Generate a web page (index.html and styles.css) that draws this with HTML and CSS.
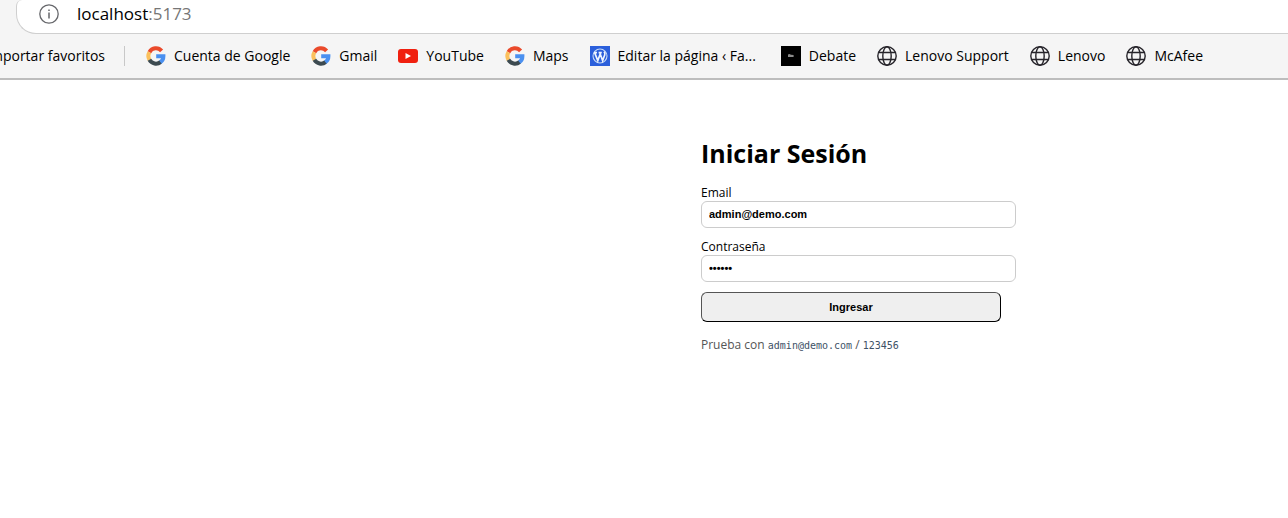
FILE: index.html
```html
<!DOCTYPE html>
<html lang="es">
<head>
<meta charset="utf-8">
<title>Iniciar Sesión</title>
<link rel="stylesheet" href="styles.css">
</head>
<body>
<svg class="defs" aria-hidden="true">
  <symbol id="google" viewBox="0 0 20 20">
    <g fill="none" stroke-width="4">
      <path stroke="#ea4a2b" d="M3.4 6.2A7.4 7.4 0 0 1 15.6 4.9"/>
      <path stroke="#fbc05c" d="M3.5 13.9A7.6 7.6 0 0 1 3.4 6.2"/>
      <path stroke="#3c4a50" d="M14.8 15.9A7.6 7.6 0 0 1 3.4 13.8"/>
      <path stroke="#4a90f0" d="M10.2 10.2H17.4A7.5 7.5 0 0 1 14.4 16.2"/>
    </g>
  </symbol>
  <symbol id="globe" viewBox="0 0 20 20">
    <g fill="none" stroke="#26242a" stroke-width="1.4">
      <circle cx="10" cy="10" r="9.2"/>
      <ellipse cx="10" cy="10" rx="4.2" ry="9.2"/>
      <path d="M1.7 6.5H18.3M1.7 13.5H18.3"/>
    </g>
  </symbol>
</svg>
<header class="browser">
  <div class="address">
    <svg class="info" viewBox="0 0 20 20" fill="none" stroke="#66676b" aria-hidden="true">
      <circle cx="10" cy="10" r="9.2" stroke-width="1.3"/>
      <path d="M10 8.6V14.4M10 5.4V7" stroke-width="1.5"/>
    </svg>
    <span class="url">localhost<span class="port">:5173</span></span>
  </div>
  <nav class="bookmarks">
    <a class="import" href="#">mportar favoritos</a>
    <span class="divider"></span>
    <a class="bookmark" href="#"><svg class="icon"><use href="#google"/></svg>Cuenta de Google</a>
    <a class="bookmark" href="#"><svg class="icon"><use href="#google"/></svg>Gmail</a>
    <a class="bookmark" href="#"><svg class="icon" viewBox="0 0 20 20"><rect y="3" width="20" height="14" rx="3" fill="#f0200f"/><path d="M7.5 7L13 10L7.5 13Z" fill="#fff"/></svg>YouTube</a>
    <a class="bookmark" href="#"><svg class="icon"><use href="#google"/></svg>Maps</a>
    <a class="bookmark" href="#"><svg class="icon" viewBox="0 0 20 20"><path fill="#2b5fdb" d="M0 0H20V20H0Z"/><circle cx="10" cy="10" r="7" fill="none" stroke="#c8dcf6" stroke-width="1.1"/><path d="M4.6 6.6L7.8 14.6L10.2 8L12.6 14.6L14.7 9Q15.4 7 14 5.6M3.9 6.6H7M8.6 6.6H11.8" fill="none" stroke="#eef5ff" stroke-width="1.7"/></svg>Editar la página ‹ Fa...</a>
    <a class="bookmark bookmark-spaced" href="#"><svg class="icon" viewBox="0 0 20 20"><path fill="#000" d="M0 0H20V20H0Z"/><path fill="#8b8b8b" d="M7 8.5L8.5 8L10 8.7L12.6 9V11H7Z"/></svg>Debate</a>
    <a class="bookmark" href="#"><svg class="icon"><use href="#globe"/></svg>Lenovo Support</a>
    <a class="bookmark" href="#"><svg class="icon"><use href="#globe"/></svg>Lenovo</a>
    <a class="bookmark" href="#"><svg class="icon"><use href="#globe"/></svg>McAfee</a>
  </nav>
</header>
<main class="page">
  <form class="login">
    <h1 class="title">Iniciar Sesión</h1>
    <div class="field">
      <label for="email">Email</label>
      <input class="input" id="email" type="email" value="admin@demo.com">
    </div>
    <div class="field">
      <label for="password">Contraseña</label>
      <input class="input" id="password" type="password" value="123456">
    </div>
    <button class="submit" type="button">Ingresar</button>
    <p class="hint">Prueba con <code>admin@demo.com</code> / <code>123456</code></p>
  </form>
</main>
</body>
</html>
```
FILE: styles.css
```css
body {
  margin: 0;
  background: #fff;
  color: #000;
  font-family: "Open Sans", "Noto Sans", sans-serif;
  overflow-x: hidden;
}
.defs {
  display: block;
  width: 0;
  height: 0;
}
.browser {
  background: #f5f5f5;
  border-bottom: 2px solid #bdbdbd;
}
.address {
  display: flex;
  align-items: center;
  gap: 18px;
  height: 28px;
  margin-left: 16px;
  padding: 0 22px 5px;
  background: #fff;
  border: 1px solid #cfcfcf;
  border-width: 0 0 1px 1px;
  border-radius: 6px 0 0 20px;
}
.info {
  width: 20px;
  height: 20px;
}
.url {
  font-size: 17px;
  line-height: 24px;
}
.port {
  color: #767676;
}
.bookmarks {
  display: flex;
  align-items: center;
  height: 44px;
  gap: 21px;
  font-size: 14px;
  line-height: 22px;
  white-space: nowrap;
  overflow: hidden;
}
.import {
  display: flex;
  justify-content: flex-end;
  flex: none;
  width: 105px;
  margin-right: -2px;
  color: inherit;
  text-decoration: none;
}
.divider {
  width: 1px;
  height: 20px;
  background: #c8c8c8;
}
.bookmark {
  display: flex;
  align-items: center;
  gap: 8px;
  color: inherit;
  text-decoration: none;
}
.bookmark-spaced {
  margin-left: 4px;
}
.icon {
  flex: none;
  width: 20px;
  height: 20px;
}
.page {
  display: flex;
  justify-content: center;
  padding: 54px 0 0 414px;
}
.login {
  width: 300px;
}
.title {
  margin: 0 0 12px;
  font-size: 25px;
  line-height: 38px;
  font-weight: 700;
}
.field {
  display: flex;
  flex-direction: column;
  margin-bottom: 10px;
  font-size: 12px;
  line-height: 17px;
}
.input {
  box-sizing: content-box;
  width: 100%;
  height: 13px;
  padding: 6px 6px 6px 7px;
  border: 1px solid #ccc;
  border-radius: 6px;
  background: #fff;
  color: #000;
  font: 700 11px/13px "Liberation Sans", Arial, sans-serif;
}
.submit {
  display: block;
  width: 100%;
  height: 30px;
  border: 1px solid #000;
  border-top-color: #555;
  border-left-color: #555;
  border-radius: 6px;
  background: #efefef;
  color: #000;
  font: 700 11px/13px "Liberation Sans", Arial, sans-serif;
}
.hint {
  margin: 14px 0 0;
  color: #555;
  font-size: 12px;
  line-height: 18px;
}
.hint code {
  color: #3d5166;
  font: 10px/18px "DejaVu Sans Mono", monospace;
}
```
